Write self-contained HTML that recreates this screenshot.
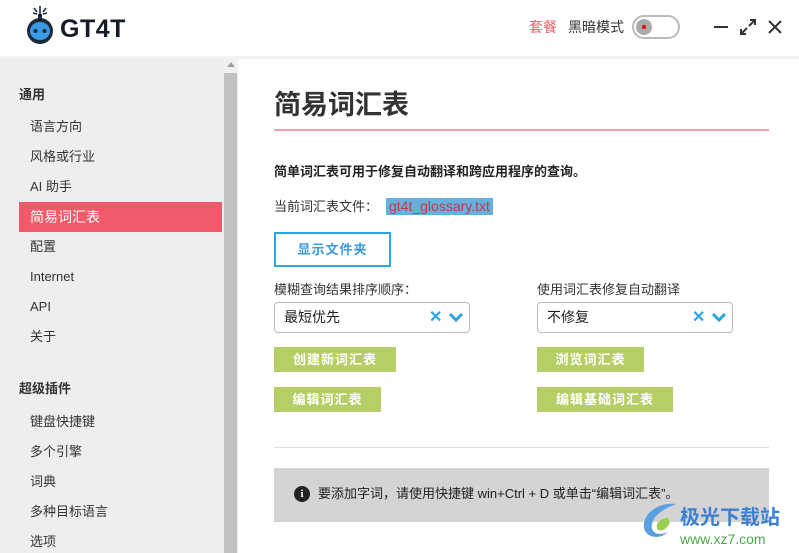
<!DOCTYPE html>
<html><head><meta charset="utf-8"><style>
*{margin:0;padding:0;box-sizing:border-box}
body{width:799px;height:553px;overflow:hidden;background:#fff;font-family:"Liberation Sans","Noto Sans CJK SC",sans-serif;color:#333;position:relative}
.a{position:absolute;white-space:nowrap;line-height:18px}
.side{position:absolute;left:0;top:58px;width:224px;height:495px;background:#eeeeee}
.bar{position:absolute;left:224px;top:58px;width:14px;height:495px;background:#f1f1f1}
.thumb{position:absolute;left:224px;top:73px;width:13px;height:480px;background:#c1c1c1}
.band{position:absolute;left:0;top:56px;width:799px;height:3px;background:#f2f2f2}
.si{font-size:13px;color:#333;left:30px}
.btn{position:absolute;background:#b5cf66;color:#fff;font-weight:bold;font-size:13px;height:25px;line-height:25px;text-align:center;letter-spacing:1px}
.sel{position:absolute;width:196px;height:31px;border:1px solid #bbb;border-radius:4px;font-size:14px;line-height:29px;padding-left:9px;color:#222}
.ic{position:absolute;top:0;color:#2fa6df;font-weight:bold;font-size:16px;line-height:29px}
</style></head><body>
<div class="band"></div>
<svg class="a" style="left:24px;top:4px" width="32" height="42" viewBox="0 0 32 42">
<g stroke="#1a2a3a" stroke-width="1.6"><line x1="16" y1="2" x2="16" y2="10"/><line x1="10" y1="4" x2="13" y2="8"/><line x1="22" y1="4" x2="19" y2="8"/><line x1="9" y1="9" x2="13" y2="10"/><line x1="23" y1="9" x2="19" y2="10"/></g>
<rect x="14" y="10" width="4" height="5" fill="#1a2a3a"/>
<circle cx="16" cy="27" r="13" fill="#1a2a3a"/><ellipse cx="16" cy="27" rx="10" ry="9" fill="#3a9be0"/>
<circle cx="11.5" cy="27" r="2" fill="#1a2a3a"/><circle cx="20.5" cy="27" r="2" fill="#1a2a3a"/>
</svg>
<div class="a" style="left:60px;top:15px;font-size:25px;line-height:28px;font-weight:bold;color:#151c28;letter-spacing:0.5px">GT4T</div>
<div class="a" style="left:529px;top:18px;font-size:14px;color:#e8606a">套餐</div>
<div class="a" style="left:568px;top:18px;font-size:14px;color:#333">黑暗模式</div>
<div class="a" style="left:632px;top:15px;width:48px;height:24px;border:2px solid #bbb;border-radius:12px"></div>
<div class="a" style="left:636px;top:19px;width:16px;height:16px;border-radius:8px;background:#aaa"></div>
<div class="a" style="left:642px;top:25px;width:4px;height:4px;border-radius:2px;background:#e00"></div>
<div class="a" style="left:714px;top:26px;width:14px;height:2px;background:#333"></div>
<svg class="a" style="left:739px;top:18px" width="18" height="18" viewBox="0 0 18 18" fill="none" stroke="#333" stroke-width="2"><path d="M11 2h5v5M16 2l-6 6M7 16H2v-5M2 16l6-6"/></svg>
<svg class="a" style="left:768px;top:20px" width="14" height="14" viewBox="0 0 14 14" stroke="#333" stroke-width="2"><path d="M1 1l12 12M13 1L1 13"/></svg>
<div class="side"></div><div class="bar"></div><div class="thumb"></div>
<div class="a" style="left:227px;top:62px;width:0;height:0;border-left:4px solid transparent;border-right:4px solid transparent;border-bottom:5px solid #a0a0a0"></div>
<div class="a" style="left:19px;top:86px;font-size:13px;font-weight:bold;color:#333">通用</div>
<div class="a si" style="top:118px">语言方向</div>
<div class="a si" style="top:148px">风格或行业</div>
<div class="a si" style="top:178px">AI 助手</div>
<div class="a" style="left:19px;top:202px;width:203px;height:30px;background:#f05a69"></div>
<div class="a si" style="top:208px;color:#fff;font-size:14px">简易词汇表</div>
<div class="a si" style="top:238px">配置</div>
<div class="a si" style="top:268px">Internet</div>
<div class="a si" style="top:298px">API</div>
<div class="a si" style="top:328px">关于</div>
<div class="a" style="left:19px;top:380px;font-size:13px;font-weight:bold;color:#333">超级插件</div>
<div class="a si" style="top:413px">键盘快捷键</div>
<div class="a si" style="top:443px">多个引擎</div>
<div class="a si" style="top:473px">词典</div>
<div class="a si" style="top:503px">多种目标语言</div>
<div class="a si" style="top:533px">选项</div>
<div class="a" style="left:274px;top:88px;font-size:27px;line-height:34px;font-weight:bold;color:#333">简易词汇表</div>
<div class="a" style="left:274px;top:129px;width:495px;height:2px;background:#f0a0aa"></div>
<div class="a" style="left:274px;top:163px;font-size:13px;font-weight:bold;color:#222">简单词汇表可用于修复自动翻译和跨应用程序的查询。</div>
<div class="a" style="left:274px;top:198px;font-size:13px;color:#333">当前词汇表文件：</div>
<div class="a" style="left:386px;top:198px;height:17px;padding:0 3px;background:#67b0de;color:#c0394a;font-size:14px;line-height:17px">gt4t_glossary.txt</div>
<div class="a" style="left:274px;top:232px;width:117px;height:35px;border:2px solid #2fa6df;color:#3a9be0;font-size:13px;font-weight:bold;text-align:center;line-height:31px;letter-spacing:1px">显示文件夹</div>
<div class="a" style="left:274px;top:281px;font-size:13px;color:#333">模糊查询结果排序顺序：</div>
<div class="a" style="left:537px;top:281px;font-size:13px;color:#333">使用词汇表修复自动翻译</div>
<div class="sel" style="left:274px;top:302px">最短优先<span class="ic" style="left:154px">✕</span><svg style="position:absolute;left:174px;top:10px" width="14" height="10" viewBox="0 0 14 10" fill="none" stroke="#2fa6df" stroke-width="3"><path d="M1 1l6 6 6-6"/></svg></div>
<div class="sel" style="left:537px;top:302px">不修复<span class="ic" style="left:154px">✕</span><svg style="position:absolute;left:174px;top:10px" width="14" height="10" viewBox="0 0 14 10" fill="none" stroke="#2fa6df" stroke-width="3"><path d="M1 1l6 6 6-6"/></svg></div>
<div class="btn" style="left:274px;top:347px;width:122px">创建新词汇表</div>
<div class="btn" style="left:274px;top:387px;width:107px">编辑词汇表</div>
<div class="btn" style="left:537px;top:347px;width:107px">浏览词汇表</div>
<div class="btn" style="left:537px;top:387px;width:136px">编辑基础词汇表</div>
<div class="a" style="left:274px;top:447px;width:495px;height:1px;background:#ddd"></div>
<div class="a" style="left:274px;top:468px;width:495px;height:54px;background:#d4d4d4"></div>
<div class="a" style="left:294px;top:486px;width:16px;height:16px;border-radius:8px;background:#222;color:#fff;font-size:11px;font-weight:bold;text-align:center;line-height:16px;font-family:'Liberation Serif',serif">i</div>
<div class="a" style="left:318px;top:485px;font-size:13px;color:#222">要添加字词，请使用快捷键 win+Ctrl + D 或单击“编辑词汇表”。</div>
<div class="a" style="left:680px;top:506px;font-size:20px;line-height:24px;font-weight:bold;color:#3d7fd0">极光下载站</div>
<div class="a" style="left:680px;top:530px;font-size:14px;color:#4aa84a">www.xz7.com</div>
<svg class="a" style="left:638px;top:500px" width="42" height="44" viewBox="0 0 42 44"><path d="M38 4C20 2 4 14 6 28c2 10 16 12 24 4-8 4-18 2-16-8 2-10 14-16 24-20z" fill="#5aa0e0"/><path d="M30 18c-8 0-14 6-10 12 4 2 10-2 12-8" fill="#9acd50"/></svg>
</body></html>
